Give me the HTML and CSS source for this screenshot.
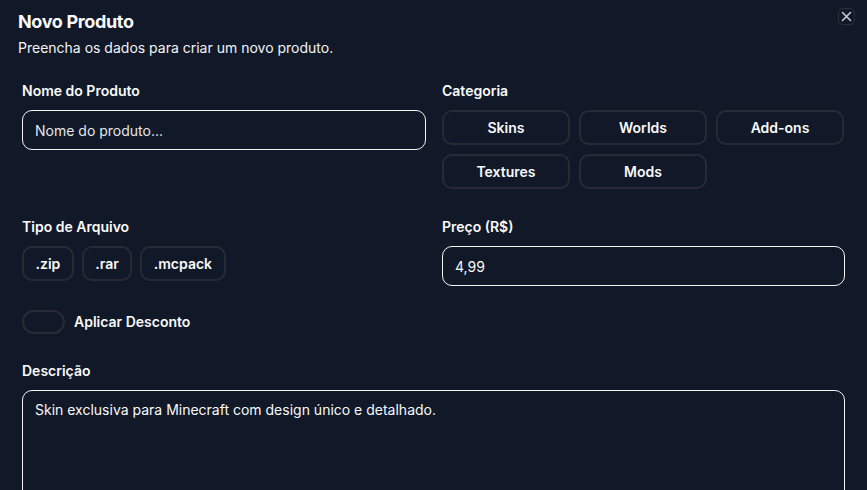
FILE: index.html
```html
<!DOCTYPE html>
<html lang="pt-BR">
<head>
<meta charset="utf-8">
<title>Novo Produto</title>
<link rel="stylesheet" href="styles.css">
</head>
<body>
<div class="dialog">
  <button class="close" aria-label="Fechar">
    <svg width="11" height="11" viewBox="0 0 11 11"><path d="M1.5 1.5 L9.5 9.5 M9.5 1.5 L1.5 9.5" stroke="#c9ccd2" stroke-width="1.6" stroke-linecap="round" fill="none"/></svg>
  </button>
  <header class="head">
    <h1 class="title">Novo Produto</h1>
    <p class="subtitle">Preencha os dados para criar um novo produto.</p>
  </header>
  <form class="form">
    <div class="grid">
      <div class="field">
        <label class="label">Nome do Produto</label>
        <input class="input" type="text" placeholder="Nome do produto...">
      </div>
      <div class="field">
        <label class="label">Categoria</label>
        <div class="cats">
          <button type="button" class="chip">Skins</button>
          <button type="button" class="chip">Worlds</button>
          <button type="button" class="chip">Add-ons</button>
          <button type="button" class="chip">Textures</button>
          <button type="button" class="chip">Mods</button>
        </div>
      </div>
      <div class="field row2">
        <label class="label">Tipo de Arquivo</label>
        <div class="types">
          <button type="button" class="chip chip-sm">.zip</button>
          <button type="button" class="chip chip-sm">.rar</button>
          <button type="button" class="chip chip-sm">.mcpack</button>
        </div>
      </div>
      <div class="field row2">
        <label class="label">Preço (R$)</label>
        <input class="input" type="text" value="4,99">
      </div>
    </div>
    <div class="toggle-row">
      <span class="toggle"></span>
      <span class="toggle-label">Aplicar Desconto</span>
    </div>
    <div class="field desc">
      <label class="label">Descrição</label>
      <textarea class="textarea">Skin exclusiva para Minecraft com design único e detalhado.</textarea>
    </div>
  </form>
</div>
</body>
</html>
```
FILE: styles.css
```css
* { box-sizing: border-box; }
html, body {
  margin: 0;
  padding: 0;
  background: #111827;
  color: #f9fafb;
  font-family: Inter, "Noto Sans", sans-serif;
  overflow: hidden;
}
.dialog {
  position: relative;
  width: 867px;
  height: 490px;
}
.close {
  position: absolute;
  left: 838px;
  top: 8px;
  width: 17px;
  height: 17px;
  padding: 0;
  border: 1px solid #2a303c;
  border-radius: 5px;
  background: transparent;
  display: flex;
  align-items: center;
  justify-content: center;
}
.head {
  padding: 8px 18px 0 18px;
}
.title {
  margin: 0;
  font-size: 18px;
  line-height: 28px;
  font-weight: 700;
  letter-spacing: -0.35px;
}
.subtitle {
  margin: 2px 0 0 0;
  font-size: 14px;
  line-height: 20px;
  color: #f3f4f6;
}
.form {
  padding: 23px 22px 0 22px;
}
.grid {
  display: grid;
  grid-template-columns: 404px 403px;
  column-gap: 16px;
  row-gap: 28px;
}
.field {
  display: flex;
  flex-direction: column;
  gap: 9px;
}
.label {
  font-size: 14px;
  line-height: 20px;
  font-weight: 600;
  color: #f9fafb;
}
.input {
  height: 40px;
  border: 1px solid #f3f4f6;
  border-radius: 10px;
  background: transparent;
  color: #f9fafb;
  font-family: inherit;
  font-size: 14px;
  padding: 0 12px;
  outline: none;
}
.input::placeholder {
  color: #e5e7eb;
  opacity: 1;
}
.cats {
  display: grid;
  grid-template-columns: repeat(3, 128px);
  column-gap: 9px;
  row-gap: 9px;
}
.chip {
  height: 35px;
  border: 2px solid #262b35;
  border-radius: 10px;
  background: transparent;
  color: #f9fafb;
  font-family: inherit;
  font-size: 14px;
  font-weight: 600;
  padding: 0;
}
.types {
  display: flex;
  gap: 8px;
}
.chip-sm {
  padding: 0 11.5px;
}
.toggle-row {
  display: flex;
  align-items: center;
  gap: 9px;
  margin-top: 24px;
  height: 24px;
}
.toggle {
  width: 43px;
  height: 24px;
  border: 2px solid #262b35;
  border-radius: 12px;
}
.toggle-label {
  font-size: 14px;
  font-weight: 600;
  line-height: 20px;
}
.desc {
  margin-top: 27px;
}
.textarea {
  height: 110px;
  border: 1px solid #f3f4f6;
  border-radius: 10px;
  background: transparent;
  color: #f9fafb;
  font-family: inherit;
  font-size: 14px;
  line-height: 20px;
  padding: 9px 12px;
  outline: none;
  resize: vertical;
}
```
